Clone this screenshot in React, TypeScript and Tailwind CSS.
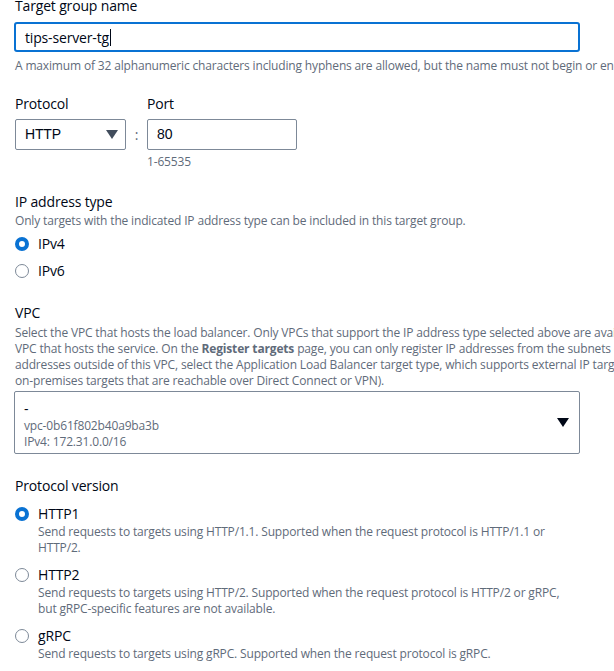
import { ReactNode } from 'react';

const SANS = "font-['Open_Sans',sans-serif]";

function Radio({ checked }: { checked?: boolean }) {
  return checked ? (
    <span className="box-border block h-[14px] w-[14px] shrink-0 rounded-full border-[4px] border-[#0972d3] bg-white" />
  ) : (
    <span className="box-border block h-[14px] w-[14px] shrink-0 rounded-full border-[1.5px] border-[#7d8998] bg-white" />
  );
}

function Caret() {
  return (
    <svg width="12" height="9" viewBox="0 0 12 9" className="shrink-0">
      <path d="M0 0 H12 L6 9 Z" fill="currentColor" />
    </svg>
  );
}

function RadioRow({ label, checked, children }: { label: string; checked?: boolean; children?: ReactNode }) {
  return (
    <div>
      <div className="flex items-center gap-[9px]">
        <Radio checked={checked} />
        <span className="text-[14px] leading-[20px] text-[#000716]">{label}</span>
      </div>
      {children ? (
        <div className="pl-[23px] text-[12px] leading-[16px] text-[#5f6b7a]">{children}</div>
      ) : null}
    </div>
  );
}

export default function App() {
  return (
    <div className={`h-[671px] w-[614px] overflow-hidden bg-white tracking-[-0.01em] ${SANS}`}>
      <div className="w-[800px] pl-[15px]">
        <div className="-mt-[4px] text-[14px] leading-[20px] text-[#000716]">Target group name</div>
        <div className="mt-[6px] flex h-[30px] w-[566px] -ml-[1px] items-center rounded-[3px] border-2 border-[#0972d3] px-[9px] text-[14px] text-[#000716]">
          tips-server-tg
          <span className="ml-[1px] h-[17px] w-px bg-[#000716]" />
        </div>
        <div className="mt-[6px] whitespace-nowrap text-[12px] leading-[16px] text-[#5f6b7a]">
          A maximum of 32 alphanumeric characters including hyphens are allowed, but the name must not begin or end with a hyphen.
        </div>

        <div className="mt-[20px] flex">
          <div>
            <div className="text-[14px] leading-[20px] text-[#000716]">Protocol</div>
            <div className="mt-[5px] flex h-[31px] w-[111px] items-center justify-between rounded-[2px] border border-[#7d8998] pl-[9px] pr-[7px] font-['Liberation_Sans',sans-serif] text-[14px] text-[#000716]">
              HTTP
              <span className="text-[#414d5c]"><Caret /></span>
            </div>
          </div>
          <div className="mt-[25px] flex h-[31px] w-[21px] items-center justify-center text-[14px] text-[#5f6b7a]">:</div>
          <div>
            <div className="text-[14px] leading-[20px] text-[#000716]">Port</div>
            <div className="mt-[5px] flex h-[31px] w-[150px] items-center rounded-[2px] border border-[#7d8998] px-[9px] font-['Liberation_Sans',sans-serif] text-[14px] text-[#000716]">
              80
            </div>
            <div className="mt-[4px] text-[12px] leading-[16px] text-[#5f6b7a]">1-65535</div>
          </div>
        </div>

        <div className="mt-[22px] text-[14px] leading-[20px] text-[#000716]">IP address type</div>
        <div className="mt-[1px] text-[12px] leading-[16px] text-[#5f6b7a]">
          Only targets with the indicated IP address type can be included in this target group.
        </div>
        <div className="mt-[5px] flex flex-col gap-[7px]">
          <RadioRow label="IPv4" checked />
          <RadioRow label="IPv6" />
        </div>

        <div className="mt-[22px] text-[14px] leading-[20px] text-[#000716]">VPC</div>
        <div className="mt-[2px] whitespace-nowrap text-[12px] leading-[16px] text-[#5f6b7a]">
          Select the VPC that hosts the load balancer. Only VPCs that support the IP address type selected above are available in this list. Select the
          <br />
          VPC that hosts the service. On the <span className="font-bold">Register targets</span> page, you can only register IP addresses from the subnets of this VPC. (To register IP
          <br />
          addresses outside of this VPC, select the Application Load Balancer target type, which supports external IP targets, including peered VPC and
          <br />
          on-premises targets that are reachable over Direct Connect or VPN).
        </div>
        <div className="mt-[2px] -ml-[1px] flex h-[63px] w-[566px] items-center justify-between rounded-[2px] border border-[#7d8998] pl-[9px] pr-[10px]">
          <div className="mt-[4px] text-[12px] leading-[16px] text-[#5f6b7a]">
            <div className="text-[14px] leading-[18px] text-[#000716]">-</div>
            <div>vpc-0b61f802b40a9ba3b</div>
            <div>IPv4: 172.31.0.0/16</div>
          </div>
          <span className="text-[#000716]"><Caret /></span>
        </div>

        <div className="mt-[22px] text-[14px] leading-[20px] text-[#000716]">Protocol version</div>
        <div className="mt-[8px] flex flex-col gap-[9px]">
          <RadioRow label="HTTP1" checked>
            Send requests to targets using HTTP/1.1. Supported when the request protocol is HTTP/1.1 or
            <br />
            HTTP/2.
          </RadioRow>
          <RadioRow label="HTTP2">
            Send requests to targets using HTTP/2. Supported when the request protocol is HTTP/2 or gRPC,
            <br />
            but gRPC-specific features are not available.
          </RadioRow>
          <RadioRow label="gRPC">Send requests to targets using gRPC. Supported when the request protocol is gRPC.</RadioRow>
        </div>
      </div>
    </div>
  );
}
